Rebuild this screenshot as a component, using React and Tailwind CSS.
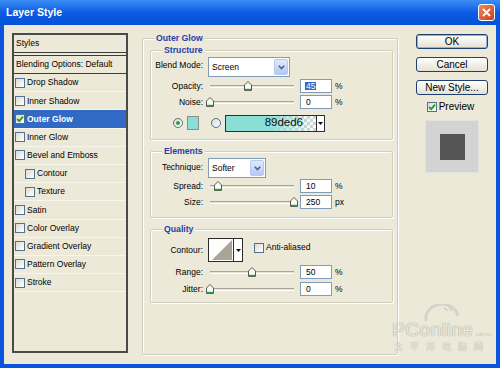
import React from 'react';

const styleItems = [
    { label: 'Drop Shadow' },
    { label: 'Inner Shadow' },
    { label: 'Outer Glow', checked: true, active: true },
    { label: 'Inner Glow' },
    { label: 'Bevel and Emboss' },
    { label: 'Contour', indent: true },
    { label: 'Texture', indent: true },
    { label: 'Satin' },
    { label: 'Color Overlay' },
    { label: 'Gradient Overlay' },
    { label: 'Pattern Overlay' },
    { label: 'Stroke' },
];

const TRACK = 84;

const App = () => {
    return (
        <div className="w-[500px] h-[368px] flex flex-col bg-[#0b55dc] font-['Liberation_Sans',Arial,sans-serif] text-black overflow-hidden">
            {/* title bar */}
            <div className="h-[25px] shrink-0 flex items-center justify-between pl-[6px] pr-[5px] bg-linear-to-b from-[#3d8ef6] via-[#0b5be3] to-[#0652d6]">
                <span className="text-white font-bold text-[10.5px] leading-none">Layer Style</span>
                <div className="w-[17px] h-[17px] rounded-[3px] border border-white bg-linear-to-br from-[#eb8a62] to-[#c53d17] flex items-center justify-center">
                    <svg width="9" height="9" viewBox="0 0 9 9">
                        <path d="M1 1L8 8M8 1L1 8" stroke="white" strokeWidth="1.8" />
                    </svg>
                </div>
            </div>

            {/* dialog body */}
            <div className="flex-1 mx-[4px] mb-[4px] bg-[#ece9d8] flex relative text-[8.5px] leading-none">
                {/* styles list */}
                <div className="mt-[8px] ml-[8px] w-[116px] h-[320px] border-2 border-[#4a4a48] flex flex-col">
                    <div className="h-[17px] pl-[2px] flex items-center">Styles</div>
                    <div className="h-[4px] border-y border-[#3c3c3a]" />
                    <div className="h-[18px] pl-[2px] flex items-center border-b border-[#3c3c3a]">Blending Options: Default</div>
                    {styleItems.map((item) => (
                        <div
                            key={item.label}
                            className={`h-[18.2px] shrink-0 flex items-center border-b border-[#f6f5ee] ${item.indent ? 'pl-[11px]' : 'pl-[1px]'} ${item.active ? 'bg-[#316ac5] text-white font-bold' : ''}`}
                        >
                            <Check checked={item.checked} />
                            <span className="ml-[2px]">{item.label}</span>
                        </div>
                    ))}
                </div>

                {/* Outer Glow */}
                <Group title="Outer Glow" className="mt-[13px] ml-[14px] w-[256px] h-[317px] pt-[11px] pl-[7px] pr-[4px]">
                    <div className="flex flex-col gap-[11px]">
                        <Group title="Structure" className="h-[90px] pt-[6px]">
                            <div className="h-[20px] flex items-center">
                                <span className="w-[52px] text-right -mt-[3px]">Blend Mode:</span>
                                <Select value="Screen" width="w-[82px]" />
                            </div>
                            <div className="mt-[1px]" />
                            <SliderRow label="Opacity:" pct={0.45} value="45" unit="%" selected />
                            <SliderRow label="Noise:" pct={0} value="0" unit="%" />
                            <div className="mt-[4px] h-[18px] flex items-center pl-[22px]">
                                <Radio checked />
                                <div className="ml-[4px] w-[12px] h-[14px] bg-[#89ded6] border border-[#8d8d86]" />
                                <div className="ml-[12px]">
                                    <Radio />
                                </div>
                                <div className="ml-[4px] w-[100px] h-[17px] border border-[#2e2e2e] flex bg-white">
                                    <div className="flex-1 bg-[repeating-conic-gradient(#d4d4d4_0%_25%,#ffffff_0%_50%)] bg-[length:6px_6px]">
                                        <div className="w-full h-full bg-linear-to-r from-[#89ded6] from-45% to-[#89ded6]/0 flex items-center justify-end pr-[13px] text-[11.5px] text-[#111]">
                                            89ded6
                                        </div>
                                    </div>
                                    <div className="w-[8px] border-l border-[#2e2e2e] flex items-center justify-center">
                                        <Caret />
                                    </div>
                                </div>
                            </div>
                        </Group>

                        <Group title="Elements" className="h-[67px] pt-[6px]">
                            <div className="h-[20px] flex items-center">
                                <span className="w-[52px] text-right -mt-[2px]">Technique:</span>
                                <Select value="Softer" width="w-[58px]" />
                            </div>
                            <SliderRow label="Spread:" pct={0.1} value="10" unit="%" />
                            <SliderRow label="Size:" pct={1} value="250" unit="px" />
                        </Group>

                        <Group title="Quality" className="h-[74px] pt-[8px]">
                            <div className="h-[24px] flex items-center">
                                <span className="w-[52px] text-right">Contour:</span>
                                <div className="ml-[5px] w-[35px] h-[24px] flex border border-[#2a2a2a] bg-white">
                                    <svg width="24" height="22" viewBox="0 0 24 22">
                                        <rect width="24" height="22" fill="#fdfdfb" />
                                        <polygon points="3,21 23,1 23,21" fill="#a9a497" />
                                    </svg>
                                    <div className="flex-1 border-l border-[#2a2a2a] flex items-center justify-center">
                                        <Caret />
                                    </div>
                                </div>
                                <div className="ml-[11px] -mt-[5px] flex items-center">
                                    <Check />
                                    <span className="ml-[2px]">Anti-aliased</span>
                                </div>
                            </div>
                            <div className="mt-[2px]" />
                            <SliderRow label="Range:" pct={0.5} value="50" unit="%" />
                            <div className="mt-[1px]" />
                            <SliderRow label="Jitter:" pct={0} value="0" unit="%" />
                        </Group>
                    </div>
                </Group>

                {/* buttons + preview */}
                <div className="mt-[9px] ml-[18px] w-[72px] flex flex-col items-center text-[10px]">
                    <Button isDefault>OK</Button>
                    <div className="mt-[8px]" />
                    <Button>Cancel</Button>
                    <div className="mt-[8px]" />
                    <Button>New Style...</Button>
                    <div className="mt-[7px] h-[10px] flex items-center -ml-[3px]">
                        <Check checked />
                        <span className="ml-[2px]">Preview</span>
                    </div>
                    <div className="mt-[8px] w-[54px] h-[53px] bg-[#d3d3d3] border border-[#e2e2e0] flex items-center justify-center">
                        <div className="w-[25px] h-[26px] bg-[#555555]" />
                    </div>
                </div>

                {/* watermark */}
                <div className="absolute left-[382px] top-[279px] w-[112px] flex flex-col items-center pointer-events-none">
                    <svg width="40" height="18" viewBox="0 0 40 18">
                        <path d="M4 17 A16 14 0 0 1 36 12" stroke="#d6d4ca" strokeWidth="3" fill="none" />
                        <path d="M22 4 l4 3 M27 3 l3 4" stroke="#cfcdc3" strokeWidth="1.5" />
                    </svg>
                    <div className="flex items-end -mt-[2px]">
                        <span className="text-[19px] leading-none tracking-[0.5px] text-[#e9e7de] [text-shadow:0_0_1px_#a8a69c,0_0_1px_#a8a69c]">PConline</span>
                        <span className="text-[5px] text-[#c8c6bc] ml-[1px] mb-[2px]">.com.cn</span>
                    </div>
                    <span className="mt-[3px] text-[9px] leading-none tracking-[7px] text-[#e4e2d8] [text-shadow:0_0_1px_#a8a69c] font-['Noto_Sans_CJK_SC',sans-serif]">太平洋电脑网</span>
                </div>
            </div>
        </div>
    );
};

// Reusable bits
const Group = ({ title, className, children }) => (
    <div className={`relative border border-[#d0cdbf] rounded-[2px] shadow-[inset_1px_1px_0_#ffffff,1px_1px_0_#ffffff] ${className}`}>
        <span className="absolute left-[11px] -top-[6px] px-[2px] bg-[#ece9d8] text-[#1f40ac] font-bold text-[8.7px] leading-[11px]">
            {title}
        </span>
        {children}
    </div>
);

const Check = ({ checked }) => (
    <span className="w-[10px] h-[10px] shrink-0 border border-[#55708f] bg-linear-to-br from-[#dcdad2] to-white flex items-center justify-center">
        {checked && (
            <svg width="8" height="8" viewBox="0 0 8 8">
                <path d="M1 4L3.2 6.2L7 1.6" stroke="#21a121" strokeWidth="1.9" fill="none" />
            </svg>
        )}
    </span>
);

const Radio = ({ checked }) => (
    <span className="w-[10px] h-[10px] rounded-full border border-[#55708f] bg-linear-to-br from-[#dcdad2] to-white flex items-center justify-center">
        {checked && <span className="w-[4px] h-[4px] rounded-full bg-[#2aa52a]" />}
    </span>
);

const Caret = () => (
    <svg width="5" height="3" viewBox="0 0 5 3">
        <polygon points="0,0 5,0 2.5,3" fill="#111" />
    </svg>
);

const Select = ({ value, width }) => (
    <div className={`ml-[5px] ${width} h-[20px] bg-white border border-[#7f9db9] flex items-center justify-between pl-[3px] pr-[1px]`}>
        <span className="mt-[1px]">{value}</span>
        <span className="w-[14px] h-[16px] rounded-[2px] border border-[#b5c8f2] bg-linear-to-b from-[#e2eafe] to-[#b4c8f5] flex items-center justify-center">
            <svg width="7" height="5" viewBox="0 0 7 5">
                <path d="M0.8 0.8L3.5 3.6L6.2 0.8" stroke="#4d6185" strokeWidth="1.6" fill="none" />
            </svg>
        </span>
    </div>
);

const SliderRow = ({ label, pct, value, unit, selected }) => (
    <div className="h-[16px] flex items-center">
        <span className="w-[52px] text-right">{label}</span>
        <div className="relative ml-[7px] w-[84px] h-[16px] flex items-center">
            <div className="w-full h-[3px] border-t border-[#a8a597] border-b border-b-white bg-[#e4e2d6]" />
            <svg
                className="absolute top-[3px]"
                style={{ left: `${pct * TRACK - 4}px` }}
                width="8"
                height="10"
                viewBox="0 0 8 10"
            >
                <path d="M0.5 9.5V4L4 0.5L7.5 4V9.5Z" fill="#fafaf6" stroke="#5a5a56" strokeWidth="1" />
                <path d="M1 8.6H7" stroke="#2f9a46" strokeWidth="1.6" />
            </svg>
        </div>
        <div className="ml-[6px] w-[32px] h-[14px] bg-white border border-[#7f9db9] pl-[4px] flex items-center">
            {selected ? <span className="bg-[#316ac5] text-white px-[1px]">{value}</span> : <span className="pl-[1px]">{value}</span>}
        </div>
        <span className="ml-[3px]">{unit}</span>
    </div>
);

const Button = ({ children, isDefault }) => (
    <div
        className={`w-[72px] h-[15px] rounded-[3px] border border-[#1f3f6e] bg-linear-to-b from-white to-[#e4e1d4] flex items-center justify-center ${isDefault ? 'shadow-[inset_0_0_0_1px_#8fb0e6]' : ''}`}
    >
        {children}
    </div>
);

export default App;
